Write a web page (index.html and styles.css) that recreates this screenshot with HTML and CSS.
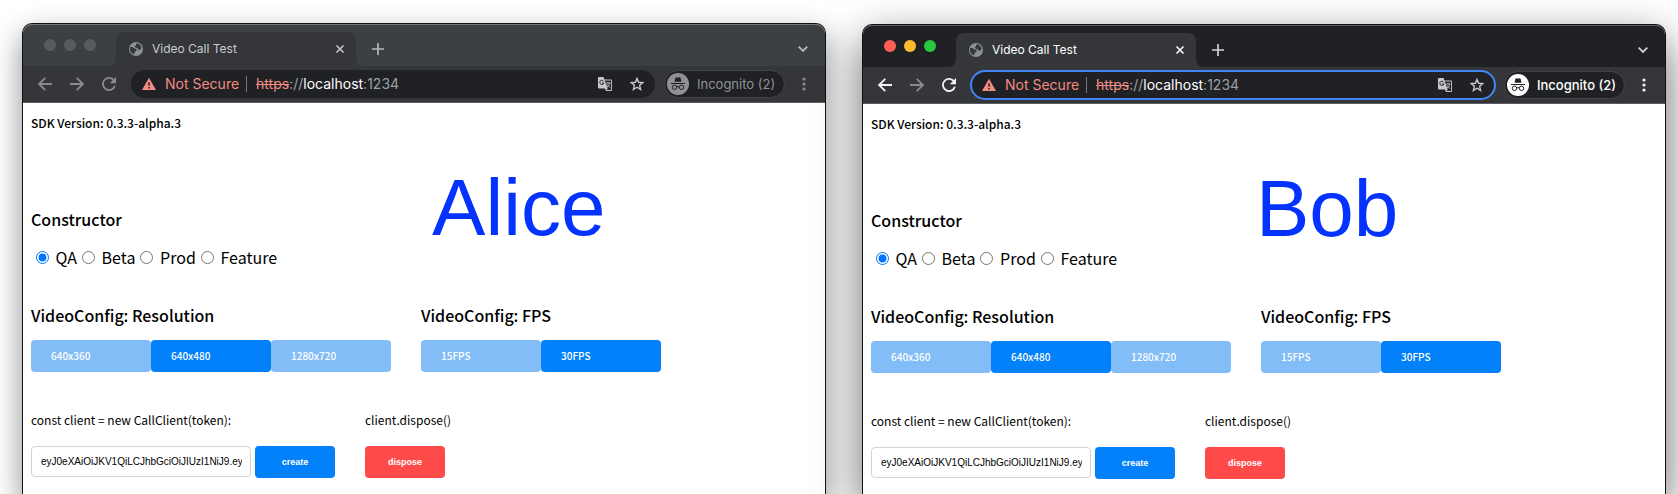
FILE: index.html
```html
<!DOCTYPE html>
<html lang="en">
<head>
<meta charset="utf-8">
<title>Video Call Test</title>
<link rel="stylesheet" href="styles.css">
</head>
<body>
<svg class="sprite" aria-hidden="true">
  <symbol id="globe" viewBox="0 0 14 14"><circle cx="7" cy="7" r="7" fill="#8b9197"/><path d="M1.300 4.900 3.600 5 5.200 6.500 7 6.700 7.800 7.700 7 9.200 5.500 9.800 5.600 11.600 4.700 12.300A6 6 0 0 1 1.200 5.500ZM7.200 1.600 9.300 1.500A6 6 0 0 1 12.500 5.600L11.600 7.500 9.800 7.700 8.600 6.200 6.300 5.600 5.600 4.300 7 3.500Z" fill="#35363a"/></symbol>
  <symbol id="close" viewBox="0 0 10 10"><path d="m1.500 1.500 7 7m0-7-7 7" stroke="currentColor" stroke-width="1.500" fill="none"/></symbol>
  <symbol id="plus" viewBox="0 0 12 12"><path d="M6 0v12M0 6h12" stroke="currentColor" stroke-width="1.700"/></symbol>
  <symbol id="chevron" viewBox="0 0 10 10"><path d="m.7 2.700 4.300 4.300 4.300-4.300" stroke="currentColor" stroke-width="1.800" fill="none"/></symbol>
  <symbol id="back" viewBox="0 0 14 14"><path d="M14 7H1.500M7.300.8 1.100 7l6.200 6.200" stroke="currentColor" stroke-width="1.800" fill="none"/></symbol>
  <symbol id="forward" viewBox="0 0 14 14"><path d="M0 7h12.500M6.700.8 12.900 7l-6.200 6.200" stroke="currentColor" stroke-width="1.800" fill="none"/></symbol>
  <symbol id="reload" viewBox="0 0 14 14"><path d="M12.900 8.800A6.100 6.100 0 1 1 11.600 2.900" stroke="currentColor" stroke-width="1.800" fill="none"/><path d="M14 0v6.200H7.800Z" fill="currentColor"/></symbol>
  <symbol id="warning" viewBox="0 0 14 13"><path d="M7 .3 14 12.500H0Z" fill="#f28b82"/><path d="M7 4.700v3.600M7 9.500v1.500" stroke="#202124" stroke-width="1.500"/></symbol>
  <symbol id="translate" viewBox="0 0 14 14"><path d="M1 0h4.600l.8 2.500H13a1 1 0 0 1 1 1V13a1 1 0 0 1-1 1H8l-1-2.500H1a1 1 0 0 1-1-1V1a1 1 0 0 1 1-1Z" fill="currentColor"/><path d="M6.800 3.400H13.100V13.100H8.600L9.700 11.600Z" fill="#202124"/><path d="M5.700 4.300A2.100 2.100 0 1 0 5.900 6H3.900" stroke="#202124" stroke-width="1" fill="none"/><path d="M8 6h4.500M10.200 5v1m1.500 0c-.3 1.700-1.300 3-2.700 4M8.900 7.300l3.200 3.400" stroke="currentColor" stroke-width=".9" fill="none"/></symbol>
  <symbol id="star" viewBox="0 0 14 14"><path d="m7 1.400 1.600 3.900 4.200.3-3.200 2.700 1 4.100L7 10.200l-3.600 2.200 1-4.100L1.200 5.600l4.200-.3Z" fill="none" stroke="currentColor" stroke-width="1.400"/></symbol>
  <symbol id="incognito" viewBox="0 0 22 22"><circle cx="11" cy="11" r="11" fill="currentColor"/><g fill="#202124"><path d="m7.500 8.700.9-3.700q.3-1 1.200-.7l1.400.4 1.400-.4q.9-.3 1.200.7l.9 3.700ZM4 10h14v1H4Z"/></g><g fill="none" stroke="#202124"><circle cx="7.500" cy="14.300" r="2.200"/><circle cx="14.500" cy="14.300" r="2.200"/><path d="M9.700 14q1.300-.7 2.600 0"/></g></symbol>
  <symbol id="dots" viewBox="0 0 4 14"><g fill="currentColor"><circle cx="2" cy="2" r="1.600"/><circle cx="2" cy="7" r="1.600"/><circle cx="2" cy="12" r="1.600"/></g></symbol>
</svg>
<main class="desktop">
  <section class="window window-inactive">
    <div class="tabstrip">
      <div class="lights"><i class="light"></i><i class="light"></i><i class="light"></i></div>
      <div class="tab"><svg class="icon"><use href="#globe"/></svg><span class="tab-title">Video Call Test</span><button class="plain" aria-label="Close tab"><svg class="icon-small"><use href="#close"/></svg></button></div>
      <button class="plain new-tab" aria-label="New tab"><svg class="icon-plus"><use href="#plus"/></svg></button>
      <button class="plain tab-search" aria-label="Search tabs"><svg class="icon-small"><use href="#chevron"/></svg></button>
    </div>
    <div class="toolbar">
      <div class="nav">
        <button class="plain" aria-label="Back"><svg class="icon"><use href="#back"/></svg></button>
        <button class="plain" aria-label="Forward"><svg class="icon"><use href="#forward"/></svg></button>
        <button class="plain" aria-label="Reload"><svg class="icon"><use href="#reload"/></svg></button>
      </div>
      <div class="omnibox">
        <svg class="icon"><use href="#warning"/></svg><span class="insecure">Not Secure</span>
        <span class="url"><s>https</s>://<b>localhost</b>:1234</span>
        <button class="plain" aria-label="Translate"><svg class="icon"><use href="#translate"/></svg></button>
        <button class="plain" aria-label="Bookmark"><svg class="icon"><use href="#star"/></svg></button>
      </div>
      <button class="profile"><svg class="avatar"><use href="#incognito"/></svg>Incognito (2)</button>
      <button class="plain menu" aria-label="Menu"><svg class="icon-dots"><use href="#dots"/></svg></button>
    </div>
    <div class="page">
      <p class="version">SDK Version: 0.3.3-alpha.3</p>
      <div class="user user-alice">Alice</div>
      <h2 class="heading">Constructor</h2>
      <div class="radios"><label><input type="radio" name="env-a" checked> QA</label><label><input type="radio" name="env-a"> Beta</label><label><input type="radio" name="env-a"> Prod</label><label><input type="radio" name="env-a"> Feature</label></div>
      <div class="configs">
        <div><h2 class="heading">VideoConfig: Resolution</h2><div class="options"><button class="option">640x360</button><button class="option selected">640x480</button><button class="option">1280x720</button></div></div>
        <div><h2 class="heading">VideoConfig: FPS</h2><div class="options"><button class="option">15FPS</button><button class="option selected">30FPS</button></div></div>
      </div>
      <div class="client">
        <div><label class="caption" for="token-a">const client = new CallClient(token):</label><div class="controls"><input class="token" id="token-a" type="text" value="eyJ0eXAiOiJKV1QiLCJhbGciOiJIUzI1NiJ9.eyJ"><button class="action">create</button></div></div>
        <div><p class="caption">client.dispose()</p><div class="controls"><button class="action danger">dispose</button></div></div>
      </div>
    </div>
  </section>
  <section class="window window-active">
    <div class="tabstrip">
      <div class="lights"><i class="light red"></i><i class="light yellow"></i><i class="light green"></i></div>
      <div class="tab"><svg class="icon"><use href="#globe"/></svg><span class="tab-title">Video Call Test</span><button class="plain" aria-label="Close tab"><svg class="icon-small"><use href="#close"/></svg></button></div>
      <button class="plain new-tab" aria-label="New tab"><svg class="icon-plus"><use href="#plus"/></svg></button>
      <button class="plain tab-search" aria-label="Search tabs"><svg class="icon-small"><use href="#chevron"/></svg></button>
    </div>
    <div class="toolbar">
      <div class="nav">
        <button class="plain" aria-label="Back"><svg class="icon"><use href="#back"/></svg></button>
        <button class="plain dim" aria-label="Forward"><svg class="icon"><use href="#forward"/></svg></button>
        <button class="plain" aria-label="Reload"><svg class="icon"><use href="#reload"/></svg></button>
      </div>
      <div class="omnibox">
        <svg class="icon"><use href="#warning"/></svg><span class="insecure">Not Secure</span>
        <span class="url"><s>https</s>://<b>localhost</b>:1234</span>
        <button class="plain" aria-label="Translate"><svg class="icon"><use href="#translate"/></svg></button>
        <button class="plain" aria-label="Bookmark"><svg class="icon"><use href="#star"/></svg></button>
      </div>
      <button class="profile"><svg class="avatar"><use href="#incognito"/></svg>Incognito (2)</button>
      <button class="plain menu" aria-label="Menu"><svg class="icon-dots"><use href="#dots"/></svg></button>
    </div>
    <div class="page">
      <p class="version">SDK Version: 0.3.3-alpha.3</p>
      <div class="user user-bob">Bob</div>
      <h2 class="heading">Constructor</h2>
      <div class="radios"><label><input type="radio" name="env-b" checked> QA</label><label><input type="radio" name="env-b"> Beta</label><label><input type="radio" name="env-b"> Prod</label><label><input type="radio" name="env-b"> Feature</label></div>
      <div class="configs">
        <div><h2 class="heading">VideoConfig: Resolution</h2><div class="options"><button class="option">640x360</button><button class="option selected">640x480</button><button class="option">1280x720</button></div></div>
        <div><h2 class="heading">VideoConfig: FPS</h2><div class="options"><button class="option">15FPS</button><button class="option selected">30FPS</button></div></div>
      </div>
      <div class="client">
        <div><label class="caption" for="token-b">const client = new CallClient(token):</label><div class="controls"><input class="token" id="token-b" type="text" value="eyJ0eXAiOiJKV1QiLCJhbGciOiJIUzI1NiJ9.eyJ"><button class="action">create</button></div></div>
        <div><p class="caption">client.dispose()</p><div class="controls"><button class="action danger">dispose</button></div></div>
      </div>
    </div>
  </section>
</main>
</body>
</html>
```

FILE: styles.css
```css
* { box-sizing: border-box; }
body { margin: 0; background: #fff; overflow: hidden; }
h2, p { margin: 0; }
svg { display: block; flex: none; }
.sprite { display: none; }

.desktop {
  display: grid;
  grid-template-columns: 1fr 1fr;
  gap: 36px;
  min-height: 100vh;
  padding: 23px 12px 0 22px;
}
.window {
  display: flex;
  flex-direction: column;
  border: 1px solid #111;
  border-bottom: 0;
  border-radius: 10px 10px 0 0;
  background: #fff;
}
.window-inactive { box-shadow: 0 12px 30px rgba(0, 0, 0, .45); }
.window-active { margin-top: 1px; box-shadow: 0 16px 44px rgba(0, 0, 0, .6); }

.plain {
  display: flex;
  padding: 0;
  border: 0;
  background: none;
  color: inherit;
}
.icon { width: 14px; height: 14px; }
.icon-small { width: 10px; height: 10px; }
.icon-plus { width: 12px; height: 12px; }
.icon-dots { width: 4px; height: 14px; }

.tabstrip {
  display: flex;
  align-items: center;
  height: 42px;
  padding-right: 17px;
  border-radius: 9px 9px 0 0;
  background: #3c4043;
  box-shadow: inset 0 1px #727477;
  color: #b5b7b9;
}
.window-active .tabstrip { background: #202124; box-shadow: inset 0 1px #5c5d60; color: #d0d2d4; }
.lights { display: flex; gap: 8px; width: 93px; padding-left: 21px; }
.light { width: 12px; height: 12px; border-radius: 50%; background: #595c5f; }
.red { background: #ff5f57; }
.yellow { background: #febc2e; }
.green { background: #28c840; }
.tab {
  position: relative;
  display: flex;
  align-items: center;
  align-self: flex-end;
  width: 240px;
  height: 34px;
  padding: 0 11px 0 13px;
  border-radius: 8px 8px 0 0;
  background: #35363a;
  color: #c8cacc;
}
.tab::before, .tab::after {
  content: "";
  position: absolute;
  bottom: 0;
  width: 8px;
  height: 8px;
}
.tab::before { right: 100%; background: radial-gradient(circle at 0 0, transparent 8px, #35363a 8px); }
.tab::after { left: 100%; background: radial-gradient(circle at 100% 0, transparent 8px, #35363a 8px); }
.window-active .tab { color: #fff; }
.tab-title { flex: 1; margin-left: 9px; font: 12px/16px Inter, sans-serif; }
.new-tab { margin-left: 16px; padding-top: 8px; }
.tab-search { margin-left: auto; padding-top: 8px; }

.toolbar {
  display: flex;
  align-items: center;
  height: 37px;
  padding: 0 19px 0 15px;
  border-bottom: 1px solid #5c5d61;
  background: #35363a;
  color: #8a8b8e;
}
.window-active .toolbar { color: #f1f3f4; }
.nav { display: flex; gap: 18px; margin-right: 15px; }
.dim { color: #8a8b8e; }
.omnibox {
  display: flex;
  flex: 1;
  align-items: center;
  height: 28px;
  padding: 0 11px;
  border-radius: 14px;
  background: #202124;
  color: #c6c8ca;
  font: 14px/20px Inter, sans-serif;
}
.window-active .omnibox { outline: 2px solid #4285f4; outline-offset: -1px; }
.omnibox .plain { margin-left: 18px; }
.insecure { margin: 0 7px 0 9px; color: #f28b82; }
.url { flex: 1; padding-left: 9px; border-left: 1px solid #75777a; line-height: 16px; color: #9aa0a6; }
.url s { color: #f28b82; }
.url b { color: #fff; font-weight: 400; }
.profile {
  display: flex;
  align-items: center;
  gap: 8px;
  width: 121px;
  height: 28px;
  margin: 0 17px 0 9px;
  padding: 0 2px;
  border: 1px solid #424347;
  border-radius: 14px;
  background: #202124;
  color: #8f9194;
  font: 13px/16px Inter, sans-serif;
  white-space: nowrap;
}
.window-active .profile { color: #fff; font-weight: 500; }
.avatar { width: 22px; height: 22px; }

.page {
  position: relative;
  flex: 1;
  padding: 10px 8px 16px;
  color: #000;
  font: 16px/24px "Noto Sans CJK SC", sans-serif;
}
.version { font-size: 12px; line-height: 20px; font-weight: 500; }
/* Participant name floats over the empty area of the test page. */
.user {
  position: absolute;
  top: 60px;
  color: #0433ff;
  font: 80px/90px "Liberation Sans", sans-serif;
}
.user-alice { left: 51%; }
.user-bob { left: 49%; }
.version + .user + .heading { margin-top: 74px; }
.heading { font-size: 16px; line-height: 24px; font-weight: 500; }
.radios { display: flex; margin-top: 14px; }
.radios input { width: 13px; height: 13px; margin: 3px 3px 0 5px; accent-color: #0075ff; }
.configs { display: flex; gap: 30px; margin-top: 34px; }
.options { display: flex; margin-top: 13px; }
.option {
  width: 120px;
  height: 32px;
  padding: 0 20px;
  border: 0;
  border-radius: 4px;
  background: #82bdf8;
  color: #fff;
  font: 500 10px/16px "Noto Sans CJK SC", sans-serif;
  text-align: left;
}
.selected { background: #0381fa; }
.client { display: flex; gap: 30px; margin-top: 38px; }
.caption { display: block; font-size: 12px; line-height: 20px; }
.controls { display: flex; gap: 4px; margin-top: 16px; }
.token {
  width: 220px;
  height: 31px;
  padding: 0 8px 0 9px;
  border: 1px solid #ced4da;
  border-radius: 4px;
  background: #fff;
  color: #000;
  font: 10px/16px "Liberation Sans", sans-serif;
}
.action {
  width: 80px;
  height: 32px;
  border: 0;
  border-radius: 4px;
  background: #0381fa;
  color: #fff;
  font: bold 9px/16px "Liberation Sans", sans-serif;
}
.danger { background: #ff4a4a; }
```
